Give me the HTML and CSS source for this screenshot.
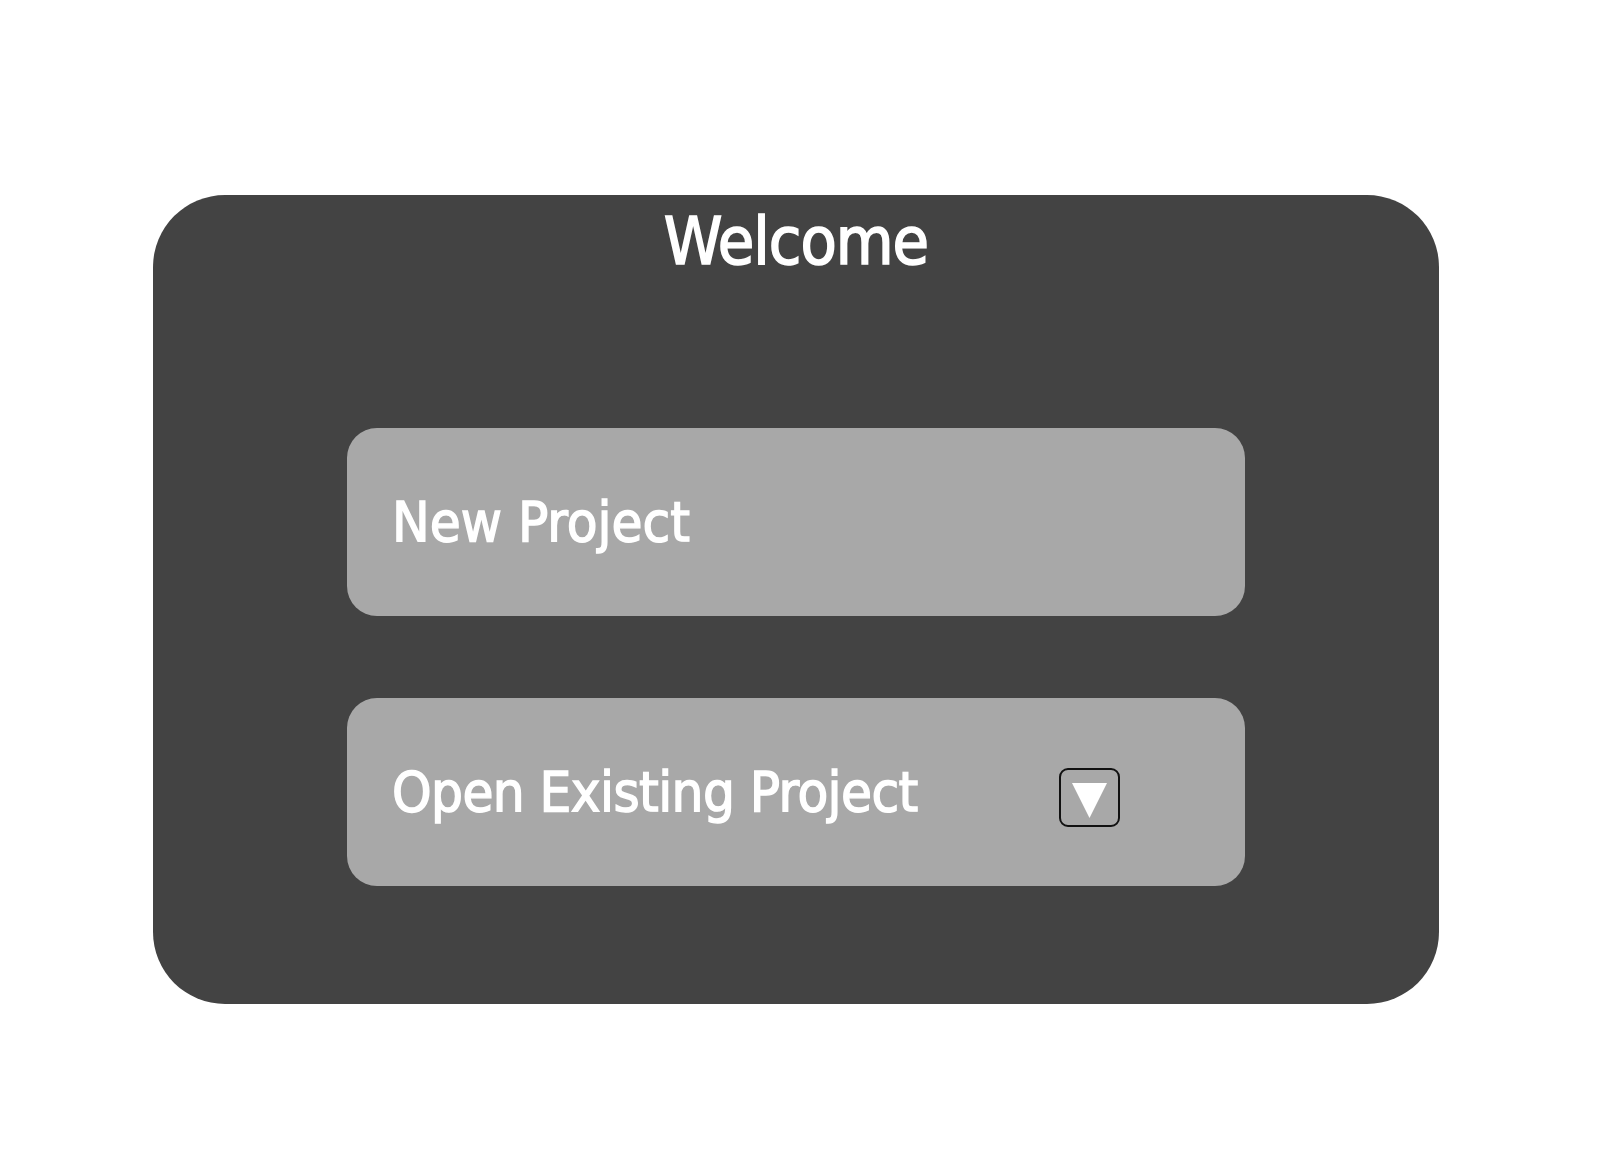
FILE: index.html
```html
<!DOCTYPE html>
<html>
<head>
<meta charset="utf-8">
<link rel="stylesheet" href="styles.css">
</head>
<body>
<div class="page">
  <div class="card">
    <div class="title">Welcome</div>
    <div class="actions">
      <div class="btn"><span class="label">New Project</span></div>
      <div class="btn">
        <span class="label label-long">Open Existing Project</span>
        <span class="drop">
          <svg width="35" height="35" viewBox="0 0 35 35"><polygon points="0,0 35,0 17.5,35" fill="#fff"/></svg>
        </span>
      </div>
    </div>
  </div>
</div>
</body>
</html>
```
FILE: styles.css
```css
html, body {
  margin: 0;
  padding: 0;
  background: #ffffff;
}
.page {
  padding-top: 195px;
  padding-left: 153px;
}
.card {
  width: 1286px;
  height: 809px;
  background: #434343;
  border-radius: 72px;
  box-sizing: border-box;
  padding-top: 14px;
  font-family: "DejaVu Sans Condensed", "DejaVu Sans", sans-serif;
  color: #ffffff;
}
.title {
  font-size: 66px;
  line-height: 66px;
  text-align: center;
  letter-spacing: -1px;
  -webkit-text-stroke: 1.6px #ffffff;
}
.actions {
  margin: 153px auto 0;
  width: 898px;
  display: flex;
  flex-direction: column;
  gap: 82px;
}
.btn {
  height: 188px;
  background: #a8a8a8;
  border-radius: 30px;
  display: flex;
  align-items: center;
  padding-left: 45px;
  padding-right: 125px;
}
.label {
  font-size: 56px;
  line-height: 56px;
  -webkit-text-stroke: 1.4px #ffffff;
}
.label-long {
  letter-spacing: -0.6px;
}
.drop {
  margin-left: auto;
  margin-top: 10px;
  width: 57px;
  height: 55px;
  border: 2px solid #111111;
  border-radius: 9px;
  display: flex;
  align-items: flex-start;
  justify-content: center;
  box-sizing: content-box;
}
.drop svg {
  display: block;
  margin-top: 13px;
}
```
